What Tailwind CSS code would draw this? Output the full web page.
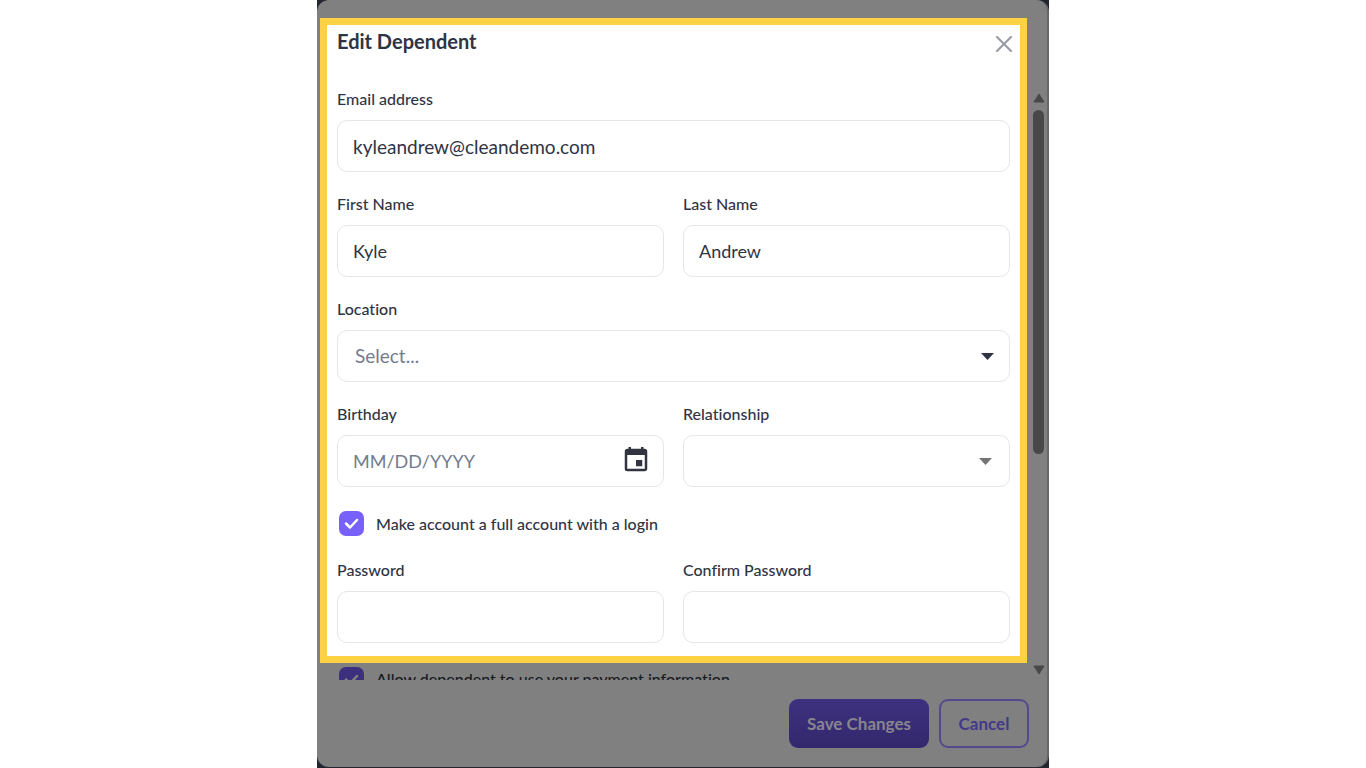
<!DOCTYPE html>
<html lang="en">
  <head>
    <meta charset="UTF-8" />
    <meta name="viewport" content="width=device-width, initial-scale=1.0" />
    <title>Edit Dependent</title>
    <script src="https://cdn.jsdelivr.net/npm/@tailwindcss/browser@4"></script>
  </head>

  <body class="bg-white font-['Lato',sans-serif] text-[#2f3444] [font-variant-ligatures:none]">
    <div class="mx-auto w-full max-w-[732px] min-h-screen bg-[#23252f]">
      <div
        class="min-h-[767px] rounded-xl bg-[#808080] border-r-2 border-[#68676c] pt-[18px]"
      >
        <div class="flex pl-[3px]">
          <div class="flex-1 min-w-0">
            <!-- highlighted form -->
            <form class="bg-white border-7 border-[#ffd143] pb-[13px]">
              <div class="flex h-[38px] items-center justify-between pl-[10px] pr-2">
                <h1 class="self-start text-[20px] leading-8 font-bold">
                  Edit Dependent
                </h1>
                <button type="button" aria-label="Close" class="text-[#9598a5]">
                  <svg class="size-4" viewBox="0 0 16 16" fill="none" stroke="currentColor" stroke-width="2" stroke-linecap="round">
                    <path d="M1 1l14 14M15 1L1 15" />
                  </svg>
                </button>
              </div>

              <div class="mt-[26px] grid grid-cols-2 gap-x-[19px] gap-y-[22px] px-[10px]">
                <div class="col-span-2">
                  <label for="email" class="block text-[16px] leading-5 font-medium">Email address</label>
                  <input
                    id="email"
                    type="text"
                    value="kyleandrew@cleandemo.com"
                    class="mt-[11px] block h-[52px] w-full rounded-[10px] border border-[#e6e6e9] px-[15px] text-[19px]"
                  />
                </div>

                <div>
                  <label for="first" class="block text-[16px] leading-5 font-medium">First Name</label>
                  <input
                    id="first"
                    type="text"
                    value="Kyle"
                    class="mt-[11px] block h-[52px] w-full rounded-[10px] border border-[#e6e6e9] px-[15px] text-[18px]"
                  />
                </div>
                <div>
                  <label for="last" class="block text-[16px] leading-5 font-medium">Last Name</label>
                  <input
                    id="last"
                    type="text"
                    value="Andrew"
                    class="mt-[11px] block h-[52px] w-full rounded-[10px] border border-[#e6e6e9] px-[15px] text-[18px]"
                  />
                </div>

                <div class="col-span-2">
                  <label for="location" class="block text-[16px] leading-5 font-medium">Location</label>
                  <div class="relative mt-[11px]">
                    <select
                      id="location"
                      class="block h-[52px] w-full appearance-none rounded-[10px] border border-[#e6e6e9] px-[17px] text-[19px] text-[#737b8e]"
                    >
                      <option>Select...</option>
                    </select>
                    <svg class="pointer-events-none absolute top-[23px] right-4 h-[7px] w-[13px] text-[#2f3444]" viewBox="0 0 13 7" fill="currentColor">
                      <path d="M0 0h13L6.500 7z" />
                    </svg>
                  </div>
                </div>

                <div>
                  <label for="birthday" class="block text-[16px] leading-5 font-medium">Birthday</label>
                  <div class="relative mt-[11px]">
                    <input
                      id="birthday"
                      type="text"
                      placeholder="MM/DD/YYYY"
                      class="block h-[52px] w-full rounded-[10px] border border-[#e6e6e9] pl-[15px] pr-12 text-[18px] placeholder:text-[#737b8e]"
                    />
                    <button type="button" aria-label="Choose date" class="absolute top-[10px] right-[13px] text-[#32353f]">
                      <svg class="size-[30px]" viewBox="0 0 24 24" fill="currentColor">
                        <path d="M17 12h-5v5h5v-5zM16 1.500v1.500H8V1.500H6v1.500H5c-1.110 0-1.990.9-1.990 2L3 19a2 2 0 0 0 2 2h14c1.100 0 2-.9 2-2V5c0-1.100-.9-2-2-2h-1V1.500h-2zm3 17.500H5V8h14v11z" />
                      </svg>
                    </button>
                  </div>
                </div>
                <div>
                  <label for="relationship" class="block text-[16px] leading-5 font-medium">Relationship</label>
                  <div class="relative mt-[11px]">
                    <select
                      id="relationship"
                      class="block h-[52px] w-full appearance-none rounded-[10px] border border-[#e6e6e9] px-[17px] text-[18px]"
                    >
                      <option></option>
                    </select>
                    <svg class="pointer-events-none absolute top-[23px] right-[18px] h-[7px] w-[13px] text-[#757575]" viewBox="0 0 13 7" fill="currentColor">
                      <path d="M0 0h13L6.500 7z" />
                    </svg>
                  </div>
                </div>

                <div class="col-span-2 flex h-[29px] items-center pl-[2px]">
                  <div class="relative size-[25px]">
                    <input
                      id="full"
                      type="checkbox"
                      checked
                      class="block size-[25px] appearance-none rounded-[7px] bg-[#7860fb]"
                    />
                    <svg class="pointer-events-none absolute inset-0 size-[25px]" viewBox="0 0 25 25" fill="none" stroke="#fff" stroke-width="2.500" stroke-linecap="round" stroke-linejoin="round">
                      <path d="M7 12.500l4 4 7-7.500" />
                    </svg>
                  </div>
                  <label for="full" class="pl-3 text-[16px] leading-6 font-medium">Make account a full account with a login</label>
                </div>

                <div>
                  <label for="password" class="block text-[16px] leading-5 font-medium">Password</label>
                  <input
                    id="password"
                    type="password"
                    class="mt-[11px] block h-[52px] w-full rounded-[10px] border border-[#e6e6e9] px-[15px] text-[18px]"
                  />
                </div>
                <div>
                  <label for="confirm" class="block text-[16px] leading-5 font-medium">Confirm Password</label>
                  <input
                    id="confirm"
                    type="password"
                    class="mt-[11px] block h-[52px] w-full rounded-[10px] border border-[#e6e6e9] px-[15px] text-[18px]"
                  />
                </div>
              </div>
            </form>

            <!-- next row, cut off by the scroll area -->
            <div class="flex h-[17px] items-start overflow-hidden pt-1 pl-[19px]">
              <div class="relative size-[25px] shrink-0">
                <input
                  id="payment"
                  type="checkbox"
                  checked
                  class="block size-[25px] appearance-none rounded-[7px] bg-[#3c307e]"
                />
                <svg class="pointer-events-none absolute inset-0 size-[25px]" viewBox="0 0 25 25" fill="none" stroke="#808080" stroke-width="2.500" stroke-linecap="round" stroke-linejoin="round">
                  <path d="M7 12.500l4 4 7-7.500" />
                </svg>
              </div>
              <label for="payment" class="pl-3 text-[16px] leading-6 font-medium text-[#181a22]">Allow dependent to use your payment information</label>
            </div>
          </div>

          <!-- scrollbar -->
          <div class="flex w-5 flex-col items-center pt-[75px] pb-[5px] pl-[3px] text-[#484848]">
            <svg class="h-[10px] w-3" viewBox="0 0 12 10" fill="currentColor" stroke="currentColor" stroke-linejoin="round">
              <path d="M6 1l5 8H1z" />
            </svg>
            <div class="mt-[7px] w-[11px] flex-[345] rounded-full bg-[#484848]"></div>
            <div class="flex-[211]"></div>
            <svg class="h-[10px] w-3" viewBox="0 0 12 10" fill="currentColor" stroke="currentColor" stroke-linejoin="round">
              <path d="M6 9l5-8H1z" />
            </svg>
          </div>
        </div>

        <div class="flex justify-end gap-[10px] py-[19px] pr-[18px]">
          <button
            type="button"
            class="h-[49px] w-[140px] rounded-[9px] bg-linear-to-b from-[#3d3180] to-[#33286c] text-[17px] font-bold text-[#87858e]"
          >
            Save Changes
          </button>
          <button
            type="button"
            class="h-[49px] w-[90px] rounded-[9px] border-2 border-[#54498f] text-[17px] font-bold text-[#44388a]"
          >
            Cancel
          </button>
        </div>
      </div>
    </div>
  </body>
</html>
